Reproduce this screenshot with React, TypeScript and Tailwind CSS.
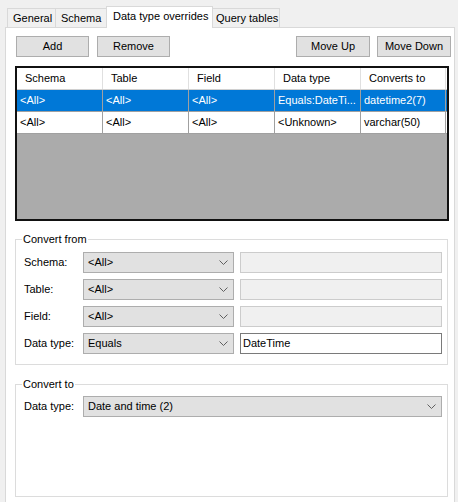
import React from 'react';

const Chevron: React.FC = () => (
  <svg width="9" height="5" viewBox="0 0 9 5" className="shrink-0">
    <path d="M0.5 0.5 L4.5 4.5 L8.5 0.5" fill="none" stroke="#606060" strokeWidth="1" />
  </svg>
);

const Combo: React.FC<{ value: string; width: string }> = ({ value, width }) => (
  <div className={`${width} h-[21px] bg-[#e1e1e1] border border-[#adadad] flex items-center justify-between pl-[4px] pr-[5px]`}>
    <span>{value}</span>
    <Chevron />
  </div>
);

const Button: React.FC<{ label: string; width: string }> = ({ label, width }) => (
  <div className={`${width} h-[21px] bg-[#e1e1e1] border border-[#adadad] flex items-center justify-center`}>
    {label}
  </div>
);

const columns = ['Schema', 'Table', 'Field', 'Data type', 'Converts to'];
const colWidths = ['w-[86px]', 'w-[86px]', 'w-[86px]', 'w-[86px]', 'w-[85px]'];

const rows = [
  { cells: ['<All>', '<All>', '<All>', 'Equals:DateTi...', 'datetime2(7)'], selected: true },
  { cells: ['<All>', '<All>', '<All>', '<Unknown>', 'varchar(50)'], selected: false },
];

const fromRows = [
  { label: 'Schema:', value: '<All>', text: '', enabled: false },
  { label: 'Table:', value: '<All>', text: '', enabled: false },
  { label: 'Field:', value: '<All>', text: '', enabled: false },
  { label: 'Data type:', value: 'Equals', text: 'DateTime', enabled: true },
];

export default function App() {
  return (
    <div
      className="w-[458px] h-[502px] bg-[#f0f0f0] overflow-hidden text-[11px] text-black leading-none whitespace-nowrap"
      style={{ fontFamily: '"Liberation Sans", Arial, sans-serif' }}
    >
      {/* Tabs */}
      <div className="h-[27px] flex items-end pl-[7px]">
        <div className="w-[48px] h-[19px] border-l border-t border-[#d9d9d9] flex items-center pl-[5px] pt-[1px]">General</div>
        <div className="w-[51px] h-[19px] border-l border-t border-[#d9d9d9] flex items-center pl-[5px] pt-[1px]">Schema</div>
        <div className="relative z-10 w-[107px] h-[22px] mb-[-1px] bg-white border-l border-t border-r border-[#d9d9d9] flex items-center pl-[6px] pb-[2px]">
          Data type overrides
        </div>
        <div className="w-[67px] h-[19px] border-t border-r border-[#d9d9d9] flex items-center pl-[3px] pt-[1px]">Query tables</div>
      </div>

      {/* Page */}
      <div className="ml-[5px] w-[450px] h-[490px] bg-white border border-[#d9d9d9]">
        <div className="mt-[8px] flex justify-between pl-[10px] pr-[3px]">
          <div className="flex gap-[8px]">
            <Button label="Add" width="w-[73px]" />
            <Button label="Remove" width="w-[73px]" />
          </div>
          <div className="flex gap-[7px]">
            <Button label="Move Up" width="w-[74px]" />
            <Button label="Move Down" width="w-[74px]" />
          </div>
        </div>

        {/* Grid */}
        <div className="mt-[9px] ml-[9px] w-[434px] h-[155px] border-2 border-[#111] bg-[#ababab] flex flex-col">
          <div className="flex h-[22px] bg-white border-b border-[#d0d0d0]">
            {columns.map((c, i) => (
              <div key={c} className={`${colWidths[i]} flex items-center pl-[8px] border-r border-[#e0e0e0]`}>
                {c}
              </div>
            ))}
          </div>
          {rows.map((r, ri) => (
            <div key={ri} className={`flex h-[22px] border-b border-[#a0a0a0] ${r.selected ? 'bg-[#0078d7] text-white' : 'bg-white'}`}>
              {r.cells.map((c, i) => (
                <div key={i} className={`${colWidths[i]} flex items-center pl-[3px] border-r border-[#a0a0a0] overflow-hidden`}>
                  {c}
                </div>
              ))}
            </div>
          ))}
        </div>

        {/* Convert from */}
        <div className="relative mt-[18px] ml-[9px] w-[433px] h-[126px] border border-[#dcdcdc] pt-[12px] pl-[8px]">
          <span className="absolute left-[6px] top-[-6px] bg-white px-[1px]">Convert from</span>
          <div className="flex flex-col gap-[6px]">
            {fromRows.map((r) => (
              <div key={r.label} className="flex items-center h-[21px]">
                <div className="w-[59px]">{r.label}</div>
                <Combo value={r.value} width="w-[151px]" />
                <div
                  className={`ml-[6px] w-[202px] h-[21px] border flex items-center pl-[2px] ${
                    r.enabled ? 'bg-white border-[#7a7a7a]' : 'bg-[#f0f0f0] border-[#cccccc]'
                  }`}
                >
                  {r.text}
                </div>
              </div>
            ))}
          </div>
        </div>

        {/* Convert to */}
        <div className="relative mt-[19px] ml-[9px] w-[433px] h-[113px] border border-[#dcdcdc] pt-[11px] pl-[8px]">
          <span className="absolute left-[6px] top-[-6px] bg-white px-[1px]">Convert to</span>
          <div className="flex items-center h-[21px]">
            <div className="w-[59px]">Data type:</div>
            <Combo value="Date and time (2)" width="w-[359px]" />
          </div>
        </div>
      </div>
    </div>
  );
}
